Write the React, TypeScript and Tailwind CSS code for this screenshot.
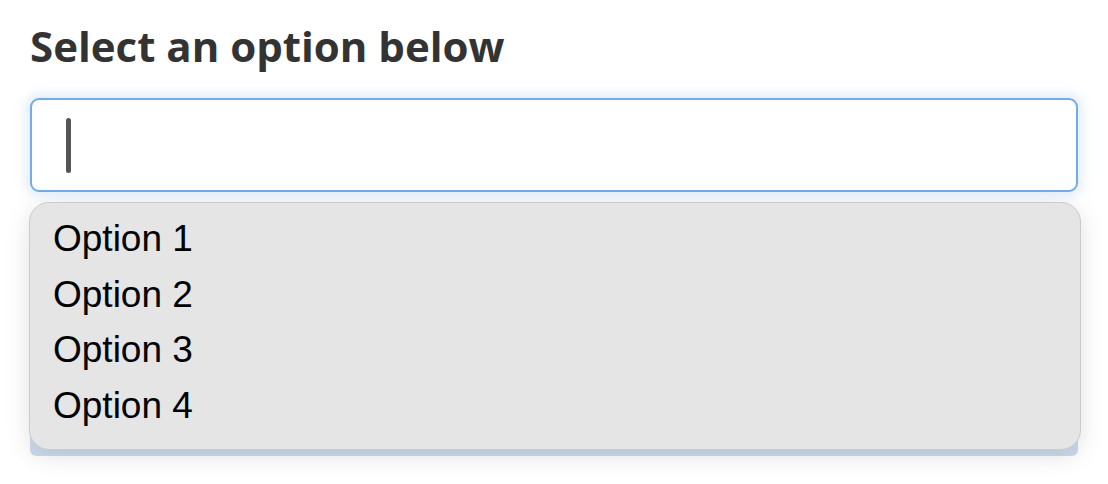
const options = ["Option 1", "Option 2", "Option 3", "Option 4"]

export default function App() {
  return (
    <div className="h-[484px] w-[1108px] bg-white px-[30px] pt-[20px]">
      <h1 className="font-['Open_Sans',sans-serif] text-[42px] font-bold leading-[52px] text-[#333333]">
        Select an option below
      </h1>

      {/* Input with focus ring */}
      <div className="mt-[26px] flex h-[94px] w-[1048px] items-center rounded-[9px] border-2 border-[#74abe8] bg-white pl-[34px] shadow-[0_0_12px_4px_rgba(120,170,230,0.22)]">
        <div className="h-[55px] w-[5px] rounded-full bg-[#555555]" />
      </div>

      {/* Options list */}
      <div className="relative mt-[10px] w-[1052px] -ml-[1px]">
        <div className="absolute bottom-[-6px] left-[1px] right-[3px] h-[40px] rounded-b-[6px] bg-[#cddcee]" />
        <ul className="relative h-[248px] rounded-[20px] border border-[#cbcbcb] bg-[#e5e5e5] pt-[8px] pl-[23px] font-['Liberation_Sans',Arial,sans-serif] text-[37px] leading-[55.5px] text-black shadow-[0_6px_24px_rgba(0,0,0,0.12)]">
          {options.map((option) => (
            <li key={option}>{option}</li>
          ))}
        </ul>
      </div>
    </div>
  )
}
